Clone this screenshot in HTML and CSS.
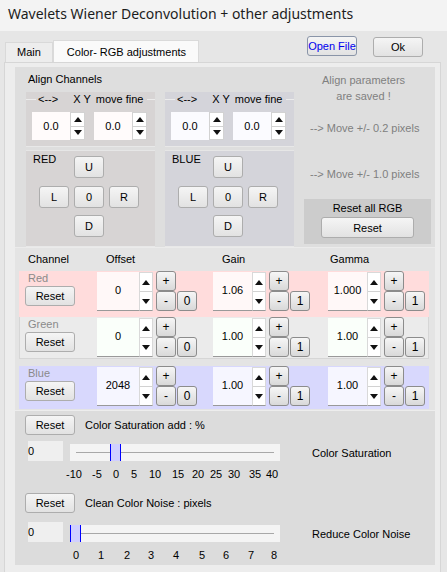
FILE: index.html
```html
<!DOCTYPE html>
<html lang="en">
<head>
    <meta charset="UTF-8">
    <meta name="viewport" content="width=device-width, initial-scale=1.0">
    <title>Wavelets Wiener Deconvolution + other adjustments</title>
    <link rel="stylesheet" href="styles.css">
</head>
<body>
    <div class="titlebar">Wavelets Wiener Deconvolution + other adjustments</div>
    <div class="client">
        <div class="topbar">
            <div class="tabs">
                <div class="tab">Main</div>
                <div class="tab active">Color- RGB adjustments</div>
            </div>
            <div class="actions">
                <button class="btn open">Open File</button>
                <button class="btn ok">Ok</button>
            </div>
        </div>

        <div class="tabpage">
            <!-- channel alignment -->
            <div class="align">
                <div class="col">
                    <div class="caption">Align Channels</div>
                    <div class="fine red">
                        <div class="legend"><span>&lt;--&gt;</span><span class="xy">X Y</span><span class="mv">move fine</span></div>
                        <div class="spins">
                            <div class="spin"><span class="field">0.0</span><span class="arrows"><i class="up"></i><i class="down"></i></span></div>
                            <div class="spin"><span class="field">0.0</span><span class="arrows"><i class="up"></i><i class="down"></i></span></div>
                        </div>
                    </div>
                    <div class="pad red">
                        <span class="pad-name">RED</span>
                        <button class="btn key k-u">U</button>
                        <button class="btn key k-l">L</button>
                        <button class="btn key k-0">0</button>
                        <button class="btn key k-r">R</button>
                        <button class="btn key k-d">D</button>
                    </div>
                </div>
                <div class="col">
                    <div class="caption"></div>
                    <div class="fine blue">
                        <div class="legend"><span>&lt;--&gt;</span><span class="xy">X Y</span><span class="mv">move fine</span></div>
                        <div class="spins">
                            <div class="spin"><span class="field">0.0</span><span class="arrows"><i class="up"></i><i class="down"></i></span></div>
                            <div class="spin"><span class="field">0.0</span><span class="arrows"><i class="up"></i><i class="down"></i></span></div>
                        </div>
                    </div>
                    <div class="pad blue">
                        <span class="pad-name">BLUE</span>
                        <button class="btn key k-u">U</button>
                        <button class="btn key k-l">L</button>
                        <button class="btn key k-0">0</button>
                        <button class="btn key k-r">R</button>
                        <button class="btn key k-d">D</button>
                    </div>
                </div>
                <div class="col info">
                    <div class="note">Align parameters<br>are saved !</div>
                    <div class="hint first">--&gt; Move +/- 0.2 pixels</div>
                    <div class="hint second">--&gt; Move +/- 1.0 pixels</div>
                    <div class="reset-all">
                        <div>Reset all RGB</div>
                        <button class="btn wide">Reset</button>
                    </div>
                </div>
            </div>

            <!-- offset / gain / gamma per channel -->
            <div class="channels">
                <div class="head">
                    <span class="h-chan">Channel</span>
                    <span class="h-off">Offset</span>
                    <span class="h-gain">Gain</span>
                    <span class="h-gam">Gamma</span>
                </div>

                <div class="row red">
                    <div class="c-label"><span class="name">Red</span><button class="btn reset">Reset</button></div>
                    <div class="c-off">
                        <div class="tspin"><span class="field wide">0</span><span class="arrows"><i class="up"></i><i class="down"></i></span></div>
                        <div class="steps"><button class="sbtn plus">+</button><button class="sbtn minus">-</button><button class="sbtn def">0</button></div>
                    </div>
                    <div class="c-gain">
                        <div class="tspin"><span class="field">1.06</span><span class="arrows"><i class="up"></i><i class="down"></i></span></div>
                        <div class="steps"><button class="sbtn plus">+</button><button class="sbtn minus">-</button><button class="sbtn def">1</button></div>
                    </div>
                    <div class="c-gam">
                        <div class="tspin"><span class="field">1.000</span><span class="arrows"><i class="up"></i><i class="down"></i></span></div>
                        <div class="steps"><button class="sbtn plus">+</button><button class="sbtn minus">-</button><button class="sbtn def">1</button></div>
                    </div>
                </div>

                <div class="row green">
                    <div class="c-label"><span class="name">Green</span><button class="btn reset">Reset</button></div>
                    <div class="c-off">
                        <div class="tspin"><span class="field wide">0</span><span class="arrows"><i class="up"></i><i class="down"></i></span></div>
                        <div class="steps"><button class="sbtn plus">+</button><button class="sbtn minus">-</button><button class="sbtn def">0</button></div>
                    </div>
                    <div class="c-gain">
                        <div class="tspin"><span class="field">1.00</span><span class="arrows"><i class="up"></i><i class="down"></i></span></div>
                        <div class="steps"><button class="sbtn plus">+</button><button class="sbtn minus">-</button><button class="sbtn def">1</button></div>
                    </div>
                    <div class="c-gam">
                        <div class="tspin"><span class="field">1.00</span><span class="arrows"><i class="up"></i><i class="down"></i></span></div>
                        <div class="steps"><button class="sbtn plus">+</button><button class="sbtn minus">-</button><button class="sbtn def">1</button></div>
                    </div>
                </div>

                <div class="row blue">
                    <div class="c-label"><span class="name">Blue</span><button class="btn reset">Reset</button></div>
                    <div class="c-off">
                        <div class="tspin"><span class="field wide">2048</span><span class="arrows"><i class="up"></i><i class="down"></i></span></div>
                        <div class="steps"><button class="sbtn plus">+</button><button class="sbtn minus">-</button><button class="sbtn def">0</button></div>
                    </div>
                    <div class="c-gain">
                        <div class="tspin"><span class="field">1.00</span><span class="arrows"><i class="up"></i><i class="down"></i></span></div>
                        <div class="steps"><button class="sbtn plus">+</button><button class="sbtn minus">-</button><button class="sbtn def">1</button></div>
                    </div>
                    <div class="c-gam">
                        <div class="tspin"><span class="field">1.00</span><span class="arrows"><i class="up"></i><i class="down"></i></span></div>
                        <div class="steps"><button class="sbtn plus">+</button><button class="sbtn minus">-</button><button class="sbtn def">1</button></div>
                    </div>
                </div>
            </div>

            <!-- saturation and color noise -->
            <div class="adjust">
                <div class="adj-top">
                    <button class="btn reset">Reset</button>
                    <span>Color Saturation add : %</span>
                </div>
                <div class="adj-line">
                    <span class="value">0</span>
                    <div class="slider">
                        <div class="track"></div>
                        <div class="thumb" style="left: 40px"></div>
                    </div>
                    <span class="adj-name">Color Saturation</span>
                </div>
                <div class="ticks">
                    <span style="left: 4px">-10</span>
                    <span style="left: 27px">-5</span>
                    <span style="left: 46px">0</span>
                    <span style="left: 64px">5</span>
                    <span style="left: 85px">10</span>
                    <span style="left: 108px">15</span>
                    <span style="left: 128px">20</span>
                    <span style="left: 146px">25</span>
                    <span style="left: 164px">30</span>
                    <span style="left: 185px">35</span>
                    <span style="left: 202px">40</span>
                </div>

                <div class="adj-top noise">
                    <button class="btn reset">Reset</button>
                    <span>Clean Color Noise : pixels</span>
                </div>
                <div class="adj-line noise">
                    <span class="value">0</span>
                    <div class="slider">
                        <div class="track"></div>
                        <div class="thumb" style="left: 0px"></div>
                    </div>
                    <span class="adj-name">Reduce Color Noise</span>
                </div>
                <div class="ticks">
                    <span style="left: 6px">0</span>
                    <span style="left: 31px">1</span>
                    <span style="left: 57px">2</span>
                    <span style="left: 81px">3</span>
                    <span style="left: 106px">4</span>
                    <span style="left: 132px">5</span>
                    <span style="left: 156px">6</span>
                    <span style="left: 181px">7</span>
                    <span style="left: 204px">8</span>
                </div>
            </div>
        </div>
    </div>
</body>
</html>
```

FILE: styles.css
```css
* {
    box-sizing: border-box;
}
body {
    margin: 0;
    width: 447px;
    height: 572px;
    overflow: hidden;
    font-family: 'Liberation Sans', Arial, sans-serif;
    font-size: 11px;
    color: #000;
    background-color: #e6e6e6;
}
button {
    font-family: inherit;
    font-size: 11px;
    color: #000;
    padding: 0;
    margin: 0;
}

/* window title */
.titlebar {
    height: 31px;
    padding: 4px 0 0 8px;
    background-color: #f3f3f3;
    font-family: 'Noto Sans', 'Open Sans', sans-serif;
    font-size: 14px;
    color: #1c1c1c;
}

.client {
    padding: 0 6px 0 4px;
}
.topbar {
    display: flex;
    height: 31px;
}
.tabs {
    display: flex;
    align-items: flex-end;
    margin-left: 1px;
}
.tab {
    height: 20px;
    padding: 3px 11px 0 11px;
    background-color: #ededed;
    border: 1px solid #d9d9d9;
    border-bottom: none;
}
.tab.active {
    height: 22px;
    padding: 5px 12px 0 13px;
    background-color: #fafafa;
    border-color: #dadada;
}
.actions {
    display: flex;
    gap: 16px;
    margin: 5px 18px 0 auto;
}

.btn {
    height: 20px;
    border: 1px solid #adadad;
    border-radius: 3px;
    background: linear-gradient(#f5f5f5, #e2e2e2);
    cursor: pointer;
}
.btn.open {
    width: 50px;
    color: #0000ee;
    border-color: #8a95a8;
}
.btn.ok {
    width: 50px;
    margin-top: 1px;
}

.tabpage {
    height: 520px;
    padding: 4px 5px 0 10px;
    background-color: #ededed;
    border: 1px solid #d6d6d6;
}

/* align channels block */
.align {
    display: grid;
    grid-template-columns: 129px 129px 127px;
    column-gap: 10px;
    height: 181px;
    padding-left: 11px;
    background-color: #dedede;
    border-bottom: 1px solid #ebebeb;
}
.col {
    display: flex;
    flex-direction: column;
}
.caption {
    height: 25px;
    padding: 6px 0 0 2px;
}
.fine {
    height: 55px;
    background-color: #d7d4d4;
    border-bottom: 1px solid #e8e8e8;
}
.legend {
    display: flex;
    align-items: center;
    height: 12px;
    margin-top: 1px;
}
.legend::before,
.legend::after {
    content: '';
    flex: 1;
    height: 1px;
    background-color: #ececec;
}
.legend::before {
    flex: 0 0 10px;
    margin-right: 2px;
}
.legend::after {
    margin-left: 4px;
}
.legend .xy {
    margin-left: 15px;
}
.legend .mv {
    margin-left: 5px;
}
.spins {
    display: flex;
    gap: 9px;
    margin: 7px 0 0 6px;
}
.spin {
    display: flex;
    height: 28px;
}
.spin .field {
    width: 38px;
    padding-top: 8px;
    text-align: center;
    background-color: #fffbfb;
}
.blue .spin .field {
    background-color: #fbfbff;
}
.arrows {
    display: flex;
    flex-direction: column;
    width: 15px;
    background-color: #fff;
    border: 1px solid #d2d2d2;
}
.arrows i {
    flex: 1;
    display: flex;
    align-items: center;
    justify-content: center;
}
.arrows i + i {
    border-top: 1px solid #d2d2d2;
}
.arrows i::before {
    content: '';
    border-left: 4px solid transparent;
    border-right: 4px solid transparent;
}
.arrows .up::before {
    border-bottom: 5px solid #111;
}
.arrows .down::before {
    border-top: 5px solid #111;
}

.pad {
    display: grid;
    grid-template-columns: repeat(3, 30px);
    grid-template-rows: repeat(3, 22px);
    column-gap: 5px;
    row-gap: 7.5px;
    height: 97px;
    margin-top: 3px;
    padding: 5px 0 0 13px;
    background-color: #d7d4d4;
    border-top: 1px solid #e6e6e6;
    border-bottom: 1px solid #e8e8e8;
}
.pad.blue,
.fine.blue {
    background-color: #d4d4da;
}
.pad-name {
    grid-area: 1 / 1;
    margin: -3px 0 0 -6px;
}
.key {
    height: 22px;
}
.k-u { grid-area: 1 / 2; }
.k-l { grid-area: 2 / 1; }
.k-0 { grid-area: 2 / 2; }
.k-r { grid-area: 2 / 3; }
.k-d { grid-area: 3 / 2; }

.info {
    color: #808080;
}
.note {
    padding: 5px 8px 0 0;
    line-height: 16px;
    text-align: center;
}
.hint {
    padding-left: 6px;
    line-height: 16px;
}
.hint.first {
    margin-top: 16px;
}
.hint.second {
    margin-top: 30px;
}
.reset-all {
    height: 45px;
    margin-top: 17px;
    padding-top: 2px;
    text-align: center;
    line-height: 14px;
    color: #000;
    background-color: #cccccc;
}
.btn.wide {
    width: 93px;
    height: 21px;
    margin-top: 2px;
}

/* per channel table */
.channels {
    height: 162px;
    padding: 0 6px 0 4px;
    background-color: #e4e4e4;
}
.head {
    display: flex;
    height: 23px;
    padding-top: 5px;
}
.head span {
    flex: none;
}
.h-chan { width: 87px; padding-left: 9px; }
.h-off { width: 116px; }
.h-gain { width: 108px; }

.row {
    display: flex;
    padding: 1px 0 0 6px;
}
.row.red {
    height: 46px;
    background-color: #ffdcdc;
}
.row.green {
    height: 42px;
    padding-left: 5px;
    background-color: #ebebeb;
    border: 1px solid #d6d6d6;
    border-top: none;
}
.row.blue {
    height: 43px;
    margin-top: 7px;
    background-color: #d8d8fd;
}
.c-label {
    display: flex;
    flex-direction: column;
    width: 72px;
}
.name {
    height: 14px;
    padding-left: 3px;
    color: #8a8a8a;
}
.btn.reset {
    width: 50px;
}
.c-off,
.c-gain,
.c-gam {
    display: flex;
    align-items: flex-start;
}
.c-off {
    width: 116px;
}
.c-gain {
    width: 115px;
}
.tspin {
    display: flex;
    height: 39px;
}
.tspin .field {
    width: 39px;
    padding-top: 12px;
    text-align: center;
    background-color: #fff8f8;
    border-bottom: 1px solid #999;
}
.tspin .field.wide {
    width: 42px;
}
.green .tspin .field {
    background-color: #fafffa;
}
.blue .tspin .field {
    background-color: #f6f6ff;
}
.tspin .arrows {
    width: 14px;
    border-color: #d9d9d9;
    border-bottom-color: #999;
}
.steps {
    display: grid;
    grid-template-columns: 20px 20px;
    grid-template-rows: 20px 20px;
    column-gap: 1px;
    margin: -1px 0 0 3px;
}
.sbtn {
    width: 20px;
    height: 20px;
    font-size: 12px;
    border: 1px solid #8c8c8c;
    border-radius: 3px;
    background: linear-gradient(#f6f6f6, #d9d9d9);
}
.plus { grid-area: 1 / 1; }
.minus { grid-area: 2 / 1; }
.def { grid-area: 2 / 2; }

/* saturation and noise sliders */
.adjust {
    height: 154px;
    margin-top: 1px;
    padding: 4px 0 0 10px;
    background-color: #dcdcdc;
}
.adj-top {
    display: flex;
    align-items: center;
    gap: 10px;
}
.adj-top.noise {
    margin-top: 12px;
}
.adj-line {
    display: flex;
    align-items: flex-start;
    margin-top: 6px;
}
.adj-line.noise {
    margin-top: 9px;
}
.value {
    width: 35px;
    height: 20px;
    margin-left: 3px;
    padding-top: 4px;
    background-color: #efefef;
}
.slider {
    position: relative;
    width: 210px;
    height: 17px;
    margin: 3px 0 0 7px;
    background-color: #f4f4f4;
}
.track {
    height: 1px;
    margin: 8px 6px 0 6px;
    background-color: #a8a8a8;
}
.thumb {
    position: absolute;
    top: 0;
    width: 11px;
    height: 17px;
    background-color: #d0d0ff;
    border-left: 1px solid #0000ff;
    border-right: 1px solid #0000ff;
}
.adj-name {
    margin: 6px 0 0 32px;
}
.ticks {
    position: relative;
    width: 210px;
    height: 13px;
    margin: 7px 0 0 45px;
}
.ticks span {
    position: absolute;
    top: 0;
    transform: translateX(-50%);
}
```
